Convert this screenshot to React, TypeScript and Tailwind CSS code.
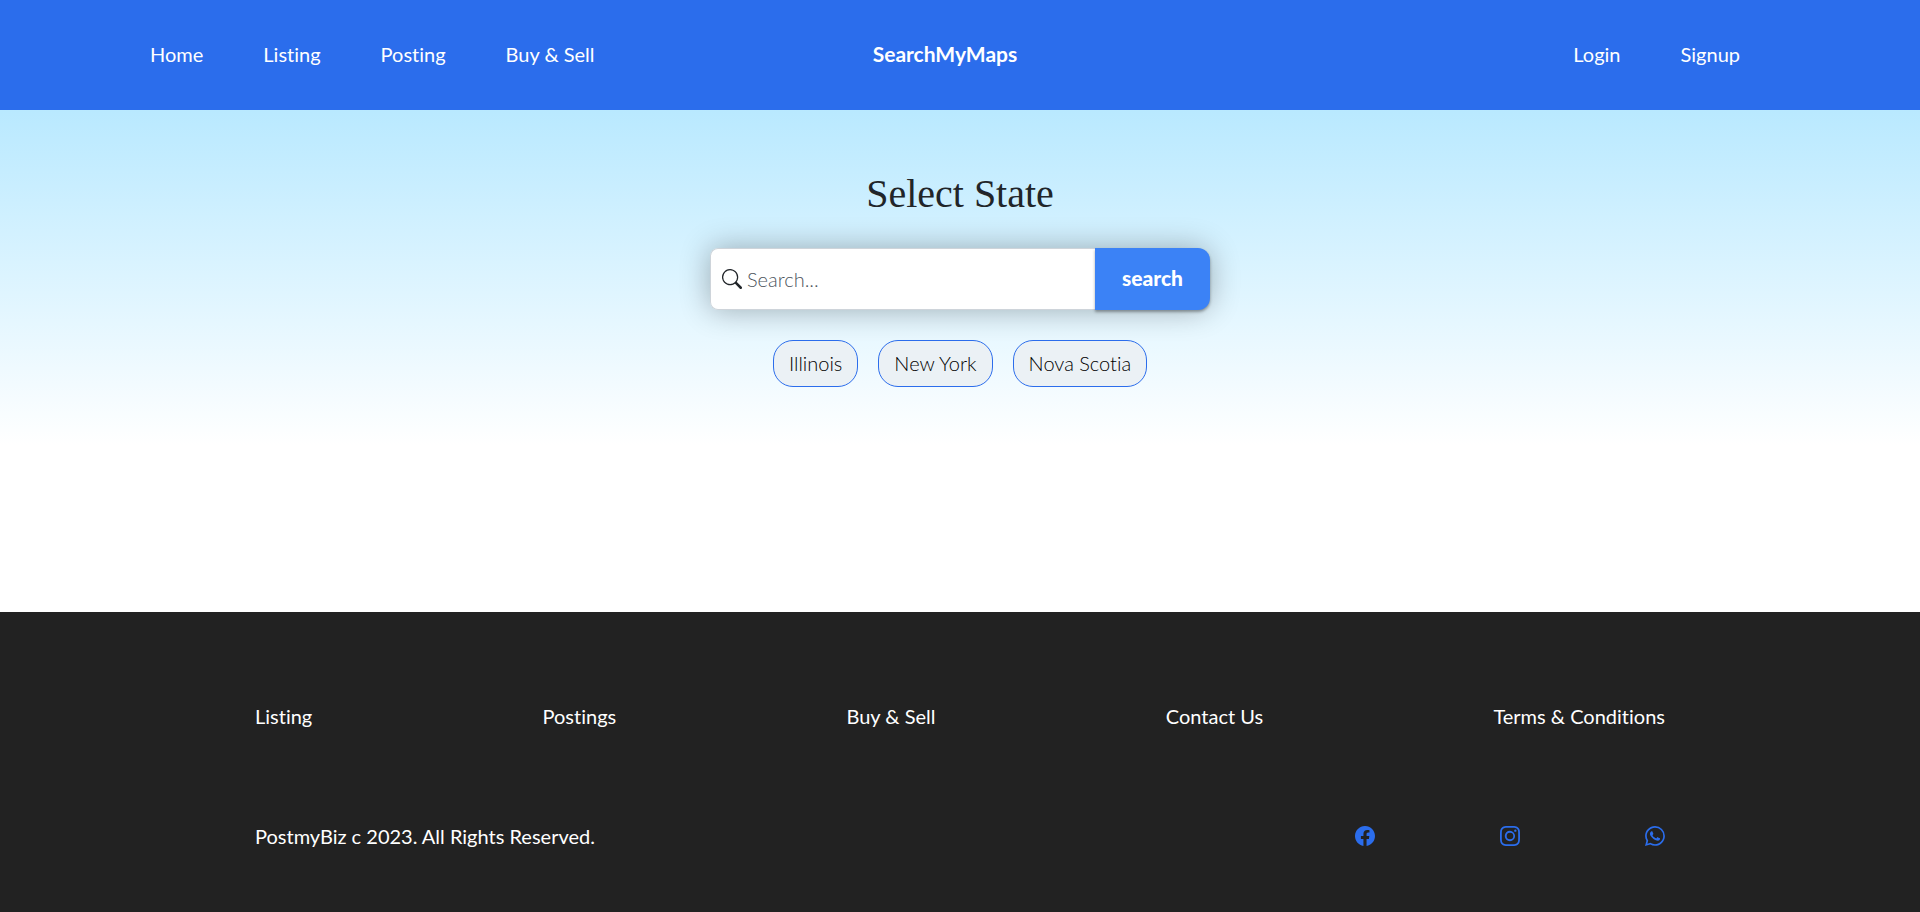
import { BsFacebook, BsInstagram, BsSearch, BsWhatsapp } from "react-icons/bs";

const navLinks = ["Home", "Listing", "Posting", "Buy & Sell"];
const accountLinks = ["Login", "Signup"];
const states = ["Illinois", "New York", "Nova Scotia"];
const footerLinks = ["Listing", "Postings", "Buy & Sell", "Contact Us", "Terms & Conditions"];
const socials = [
  { name: "Facebook", Icon: BsFacebook },
  { name: "Instagram", Icon: BsInstagram },
  { name: "WhatsApp", Icon: BsWhatsapp },
];

function Header() {
  return (
    <header className="grid grid-cols-[1fr_auto_1fr] items-center bg-[#2b6dec] pt-[39px] pr-[180px] pb-[41px] pl-[150px] text-white">
      <nav className="flex gap-[60px]">
        {navLinks.map((label) => (
          <a key={label} href="#" className="whitespace-nowrap">
            {label}
          </a>
        ))}
      </nav>
      <a href="#" className="text-[21px] font-bold">
        SearchMyMaps
      </a>
      <nav className="flex justify-end gap-[60px]">
        {accountLinks.map((label) => (
          <a key={label} href="#">
            {label}
          </a>
        ))}
      </nav>
    </header>
  );
}

function StatePicker() {
  return (
    <main className="flex grow flex-col items-center bg-[linear-gradient(to_bottom,#b9e9ff,#ffffff_335px)] px-4 pt-[60px] pb-20">
      <h1 className="font-['Liberation_Serif',serif] text-[40px] leading-12 text-[#212529]">Select State</h1>
      <form
        onSubmit={(event) => event.preventDefault()}
        className="mt-[30px] flex w-full max-w-[500px] rounded-lg rounded-r-2xl shadow-[0_0_30px_rgba(0,0,0,0.3)]"
      >
        <label className="flex min-w-0 grow items-center gap-[5px] rounded-l-lg border border-r-0 border-[#ced4da] bg-white pl-[11px] text-[#212529]">
          <BsSearch className="size-5 shrink-0" aria-hidden="true" />
          <input
            type="search"
            aria-label="Search states"
            placeholder="Search..."
            className="w-full min-w-0 bg-transparent font-light outline-none placeholder:text-[#4d555d]"
          />
        </label>
        <button
          type="submit"
          className="h-[62px] w-[115px] shrink-0 rounded-r-xl bg-[#3b82f6] pb-0.5 text-[21px] font-black text-white shadow-[0_2px_3px_rgba(0,0,0,0.35)]"
        >
          search
        </button>
      </form>
      <div className="mt-[30px] flex flex-wrap justify-center gap-5">
        {states.map((state) => (
          <button
            key={state}
            type="button"
            className="rounded-[20px] border border-[#2b6dec] bg-[#ebf1f5] px-[15px] pt-[7px] pb-2 font-light text-black"
          >
            {state}
          </button>
        ))}
      </div>
    </main>
  );
}

function Footer() {
  return (
    <footer className="flex flex-col gap-[90px] bg-[#222222] px-[255px] pt-[89px] pb-[61px] text-white">
      <nav className="flex justify-between">
        {footerLinks.map((label) => (
          <a key={label} href="#">
            {label}
          </a>
        ))}
      </nav>
      <div className="flex items-center justify-between">
        <p>PostmyBiz c 2023. All Rights Reserved.</p>
        <div className="flex gap-[125px] text-[#2b6dec]">
          {socials.map(({ name, Icon }) => (
            <a key={name} href="#" aria-label={name}>
              <Icon className="size-5" />
            </a>
          ))}
        </div>
      </div>
    </footer>
  );
}

export default function App() {
  return (
    <div className="flex min-h-screen flex-col bg-white font-['Lato',sans-serif] text-[20px] leading-[30px] [font-variant-ligatures:none]">
      <Header />
      <StatePicker />
      <Footer />
    </div>
  );
}
